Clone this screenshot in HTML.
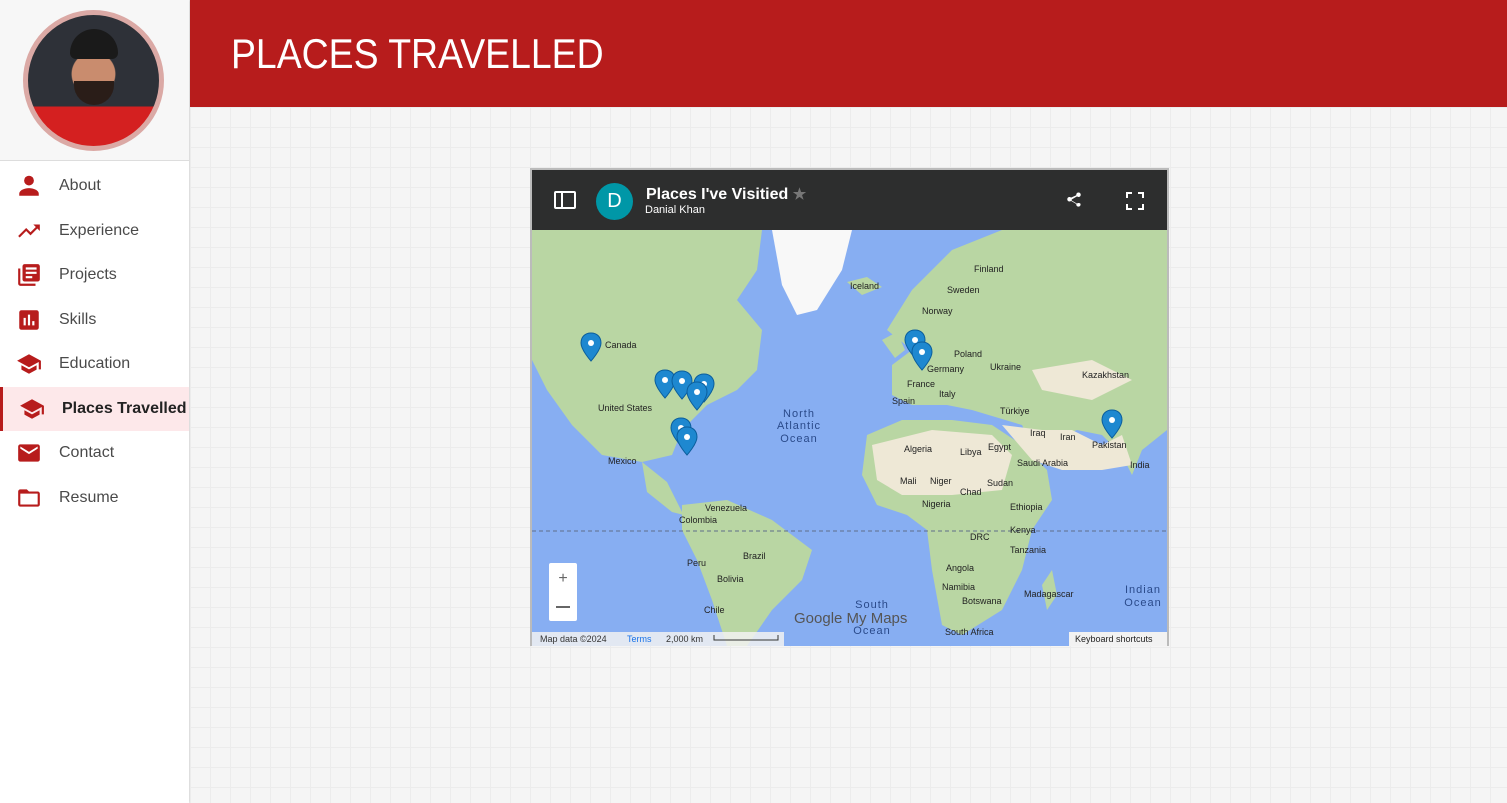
<!DOCTYPE html>
<html><head><style>
*{margin:0;padding:0;box-sizing:border-box}
body{width:1507px;height:803px;overflow:hidden;font-family:"Liberation Sans",sans-serif;background:#f4f4f4;position:relative}
.side{position:absolute;left:0;top:0;width:189px;height:803px;background:#fff;box-shadow:1px 0 3px rgba(0,0,0,.15)}
.avwrap{height:161px;background:#f7f7f7;border-bottom:1px solid #ddd;position:relative}
.av{position:absolute;left:23px;top:10px;width:141px;height:141px;border-radius:50%;border:5px solid #dba9a5;background:radial-gradient(circle at 50% 45%,#c98c6e 0 22%,transparent 23%),linear-gradient(#2e3138 0 70%,#d42020 70%);overflow:hidden}
.av:before{content:"";position:absolute;left:42px;top:14px;width:48px;height:30px;border-radius:24px 24px 6px 6px;background:#1a1a1a}
.av:after{content:"";position:absolute;left:46px;top:66px;width:40px;height:24px;border-radius:0 0 20px 20px;background:#2a1d18}
.nav{padding-top:3px}
.nav a{display:flex;align-items:center;height:44.5px;padding-left:16px;color:#4a4a4a;font-size:16px;text-decoration:none}
.nav svg{width:26px;height:26px;margin-right:17px;fill:#b71c1c}
.nav a.act{background:#fde8ea;border-left:3px solid #b71c1c;padding-left:16px;font-weight:bold;color:#222}
.hdr{position:absolute;left:190px;top:0;width:1317px;height:107px;background:#b71c1c}
.hdr h1{position:absolute;left:41px;top:30px;color:#fff;font-weight:normal;font-size:42px;transform:scaleX(.89);transform-origin:left}
.grid{position:absolute;left:190px;top:107px;right:0;bottom:0;background-image:linear-gradient(#ececec 1px,transparent 1px),linear-gradient(90deg,#ececec 1px,transparent 1px);background-size:20px 20px;background-color:#f5f5f5}
.map{position:absolute;left:530px;top:168px;width:639px;height:478px;border:2px solid #bbb;background:#2d2e2e}
.mh{height:60px;position:relative;color:#fff}
.mv{position:absolute;left:0;top:60px;width:635px;height:416px;background:#87aef2;overflow:hidden}
</style></head><body>
<div class="side">
<div class="avwrap"><div class="av"></div></div>
<div class="nav">
<a><svg viewBox="0 0 24 24"><circle cx="12" cy="7" r="4.5"/><path d="M3 21v-2c0-3 5-5 9-5s9 2 9 5v2z"/></svg>About</a>
<a><svg viewBox="0 0 24 24"><path d="M16 6l2.3 2.3-4.9 4.9-4-4L2 16.6 3.4 18l6-6 4 4 6.3-6.3L22 12V6z"/></svg>Experience</a>
<a><svg viewBox="0 0 24 24"><path d="M4 6H2v14c0 1.1.9 2 2 2h14v-2H4zm16-4H8c-1.1 0-2 .9-2 2v12c0 1.1.9 2 2 2h12c1.1 0 2-.9 2-2V4c0-1.1-.9-2-2-2zm-1 9H9V9h10zm-4 4H9v-2h6zm4-8H9V5h10z"/></svg>Projects</a>
<a><svg viewBox="0 0 24 24"><path d="M19 3H5c-1.1 0-2 .9-2 2v14c0 1.1.9 2 2 2h14c1.1 0 2-.9 2-2V5c0-1.1-.9-2-2-2zM9 17H7v-7h2zm4 0h-2V7h2zm4 0h-2v-4h2z"/></svg>Skills</a>
<a><svg viewBox="0 0 24 24"><path d="M5 13.2v4L12 21l7-3.8v-4L12 17zM12 3L1 9l11 6 9-4.9V17h2V9z"/></svg>Education</a>
<a class="act"><svg viewBox="0 0 24 24"><path d="M5 13.2v4L12 21l7-3.8v-4L12 17zM12 3L1 9l11 6 9-4.9V17h2V9z"/></svg>Places Travelled</a>
<a><svg viewBox="0 0 24 24"><path d="M20 4H4c-1.1 0-2 .9-2 2v12c0 1.1.9 2 2 2h16c1.1 0 2-.9 2-2V6c0-1.1-.9-2-2-2zm0 4l-8 5-8-5V6l8 5 8-5z"/></svg>Contact</a>
<a><svg viewBox="0 0 24 24"><path d="M20 6h-8l-2-2H4c-1.1 0-2 .9-2 2v12c0 1.1.9 2 2 2h16c1.1 0 2-.9 2-2V8c0-1.1-.9-2-2-2zm0 12H4V8h16z"/></svg>Resume</a>
</div></div>
<div class="hdr"><h1>PLACES TRAVELLED</h1></div>
<div class="grid"></div>
<div class="map">
<div class="mh">
<svg style="position:absolute;left:22px;top:21px" width="22" height="18" viewBox="0 0 22 18" fill="none" stroke="#fff" stroke-width="2"><rect x="1" y="1" width="20" height="16" rx="1"/><line x1="8" y1="1" x2="8" y2="17"/></svg>
<div style="position:absolute;left:64px;top:13px;width:37px;height:37px;border-radius:50%;background:#0097a7;color:#fff;font-size:20px;text-align:center;line-height:37px">D</div>
<div style="position:absolute;left:114px;top:15px;font-size:16px;font-weight:bold">Places I've Visitied <span style="color:#777;font-size:15px">★</span></div>
<div style="position:absolute;left:113px;top:34px;font-size:11px">Danial Khan</div>
<svg style="position:absolute;left:533px;top:21px" width="18" height="18" viewBox="0 0 24 24" fill="#fff"><path d="M18 16c-.8 0-1.5.3-2 .8L8.9 12.7c.1-.2.1-.5.1-.7s0-.5-.1-.7L16 7.2c.5.5 1.2.8 2 .8 1.7 0 3-1.3 3-3s-1.3-3-3-3-3 1.3-3 3c0 .2 0 .5.1.7L8 8.8C7.5 8.3 6.8 8 6 8c-1.7 0-3 1.3-3 3s1.3 3 3 3c.8 0 1.5-.3 2-.8l7.1 4.2c0 .2-.1.4-.1.6 0 1.6 1.300 2.9 2.9 2.9s2.9-1.3 2.9-2.9S19.6 16 18 16z"/></svg>
<svg style="position:absolute;left:594px;top:22px" width="18" height="18" viewBox="0 0 18 18" fill="none" stroke="#fff" stroke-width="2"><path d="M1 6V1h5M12 1h5v5M17 12v5h-5M6 17H1v-5"/></svg>
</div>
<div class="mv">
<svg width="635" height="416" viewBox="0 0 635 416">
<g fill="#b9d6a3">
<path d="M0 0H230L225 40 205 70 230 100 225 140 205 160 175 175 150 200 140 225 110 232 70 225 40 195 15 160 0 130Z"/>
<path d="M240 0H320L310 40 285 80 265 85 250 55Z" fill="#f8f8f8"/>
<path d="M315 52l20-5 15 10-20 8z"/>
<path d="M110 232l25 20 15 30 10 5-20-5-25-20z"/>
<path d="M150 275L195 270 240 290 280 320 270 350 240 380 215 416H195L180 370 165 330 150 300Z"/>
<path d="M355 100L380 60 420 20 470 0H635V200L610 220 600 245 590 225 570 205 545 200 520 210 500 215 490 195 440 180 415 175 380 175 360 165 360 135 380 120Z"/>
<path d="M350 110l15-8 8 18-10 8z"/>
<path d="M335 205L370 190 420 190 460 195 490 215 515 240 520 270 500 300 490 340 470 380 430 405 410 395 400 340 395 300 375 285 345 275 330 245Z"/>
<path d="M510 355l10-15 5 25-10 15z"/>
</g>
<g fill="#eee8d6">
<path d="M340 215L400 200 460 205 480 225 470 260 420 265 370 265 345 250Z"/>
<path d="M470 195l40 5 30 0 30 15 20-10 10 30-30 5-40 0-30 -10z"/>
<path d="M500 140l60-10 40 20-40 20-50-10z"/>
</g>
<line x1="0" y1="301" x2="635" y2="301" stroke="#5f6f8a" stroke-dasharray="4 3" stroke-width="1"/>
<defs><g id="pin"><path d="M0 0c-6 0-10 4-10 10 0 7 10 18 10 18s10-11 10-18c0-6-4-10-10-10z" fill="#1e88d0" stroke="#0b5e9c"/><circle cx="0" cy="10" r="3" fill="#fff"/></g></defs>
<use href="#pin" x="59" y="103"/><use href="#pin" x="133" y="140"/><use href="#pin" x="150" y="141"/><use href="#pin" x="172" y="144"/><use href="#pin" x="165" y="152"/><use href="#pin" x="149" y="188"/><use href="#pin" x="155" y="197"/><use href="#pin" x="383" y="100"/><use href="#pin" x="390" y="112"/><use href="#pin" x="580" y="180"/>
<g font-family="Liberation Sans" font-size="9" fill="#222">
<text x="73" y="118">Canada</text><text x="66" y="181">United States</text><text x="76" y="234">Mexico</text><text x="318" y="59">Iceland</text><text x="442" y="42">Finland</text><text x="415" y="63">Sweden</text><text x="390" y="84">Norway</text><text x="422" y="127">Poland</text><text x="395" y="142">Germany</text><text x="458" y="140">Ukraine</text><text x="550" y="148">Kazakhstan</text><text x="375" y="157">France</text><text x="360" y="174">Spain</text><text x="407" y="167">Italy</text><text x="468" y="184">Türkiye</text><text x="498" y="206">Iraq</text><text x="528" y="210">Iran</text><text x="560" y="218">Pakistan</text><text x="598" y="238">India</text><text x="372" y="222">Algeria</text><text x="428" y="225">Libya</text><text x="456" y="220">Egypt</text><text x="485" y="236">Saudi Arabia</text><text x="368" y="254">Mali</text><text x="398" y="254">Niger</text><text x="428" y="265">Chad</text><text x="455" y="256">Sudan</text><text x="390" y="277">Nigeria</text><text x="478" y="280">Ethiopia</text><text x="478" y="303">Kenya</text><text x="438" y="310">DRC</text><text x="478" y="323">Tanzania</text><text x="414" y="341">Angola</text><text x="410" y="360">Namibia</text><text x="430" y="374">Botswana</text><text x="492" y="367">Madagascar</text><text x="413" y="405">South Africa</text><text x="173" y="281">Venezuela</text><text x="147" y="293">Colombia</text><text x="211" y="329">Brazil</text><text x="155" y="336">Peru</text><text x="185" y="352">Bolivia</text><text x="172" y="383">Chile</text>
</g>
<g font-family="Liberation Sans" font-size="11" fill="#2a4a8a" text-anchor="middle" letter-spacing="1"><text x="267" y="187">North</text><text x="267" y="199">Atlantic</text><text x="267" y="212">Ocean</text><text x="340" y="378">South</text><text x="611" y="363">Indian</text><text x="611" y="376">Ocean</text><text x="340" y="404">Ocean</text></g>
<rect x="17" y="333" width="28" height="58" rx="2" fill="#fff"/><text x="31" y="353" font-size="16" text-anchor="middle" fill="#666" font-family="Liberation Sans">+</text><line x1="24" y1="377" x2="38" y2="377" stroke="#666" stroke-width="2"/>
<text x="262" y="393" font-family="Liberation Sans" font-size="15" fill="#555">Google My Maps</text>
<rect x="0" y="402" width="252" height="14" fill="#f2f2f2" opacity=".85"/>
<text x="8" y="412" font-family="Liberation Sans" font-size="9" fill="#333">Map data ©2024</text><text x="95" y="412" font-family="Liberation Sans" font-size="9" fill="#1a73e8">Terms</text><text x="134" y="412" font-family="Liberation Sans" font-size="9" fill="#333">2,000 km</text>
<path d="M182 405v5h64v-5" stroke="#333" fill="none"/>
<rect x="537" y="402" width="98" height="14" fill="#f2f2f2"/><text x="543" y="412" font-family="Liberation Sans" font-size="9" fill="#222">Keyboard shortcuts</text>
</svg>
</div></div>
</body></html>
